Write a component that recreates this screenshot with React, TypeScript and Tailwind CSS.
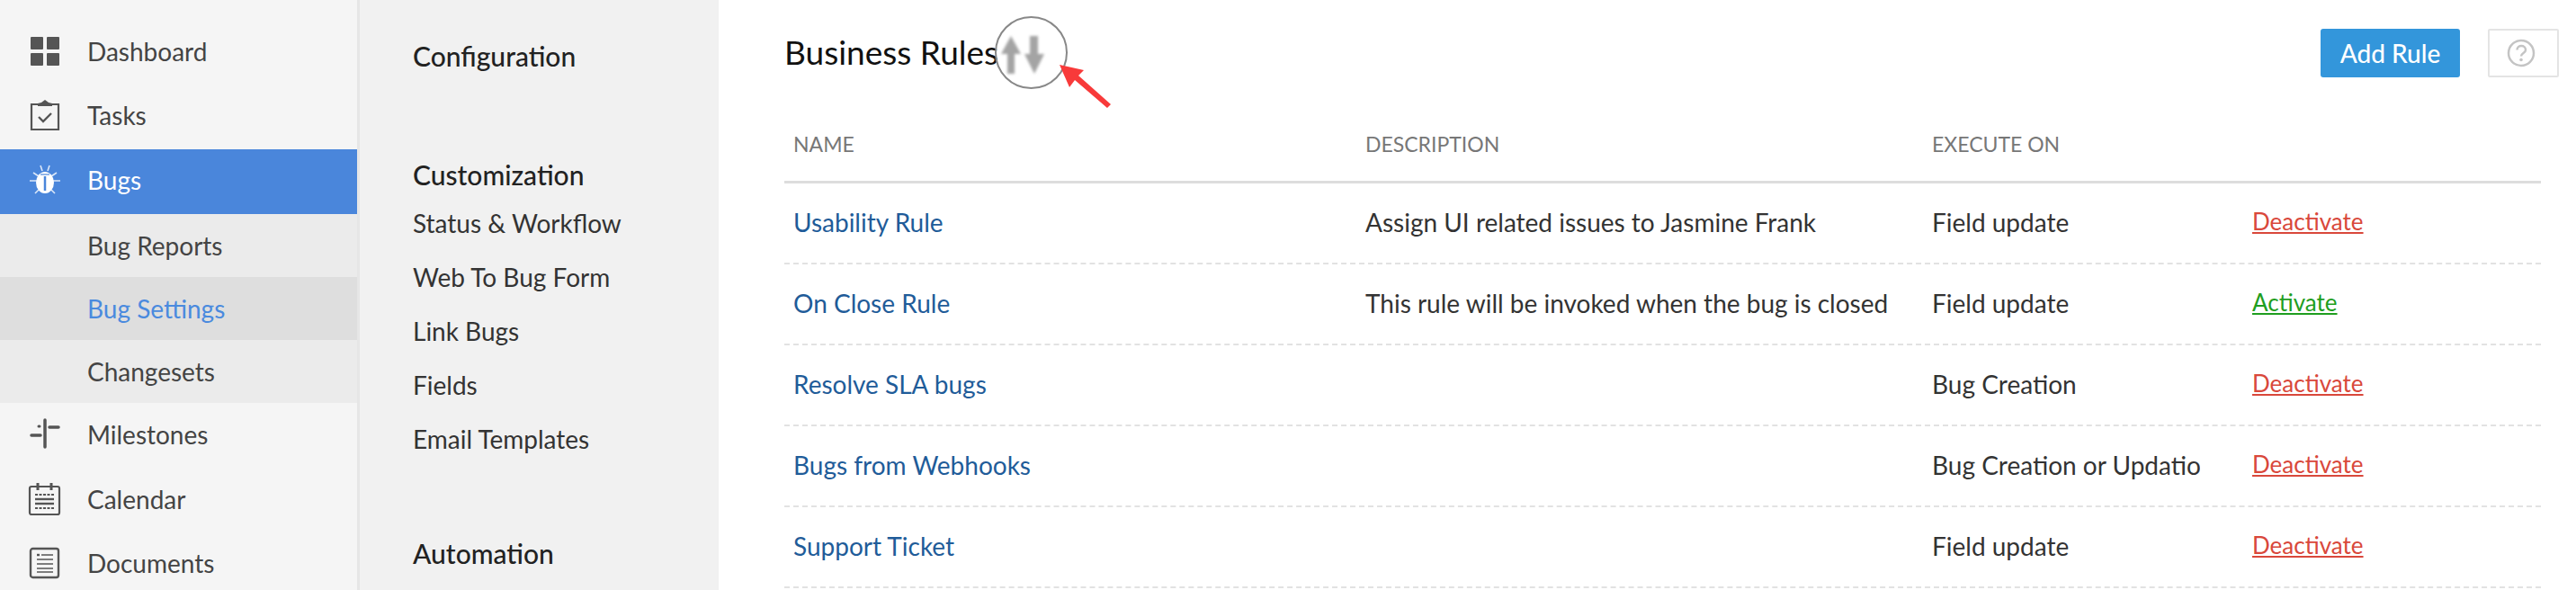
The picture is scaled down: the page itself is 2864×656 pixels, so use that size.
const font = "font-['Lato','Liberation_Sans',sans-serif]";

function DashboardIcon() {
  return (
    <svg width="36" height="36" viewBox="0 0 36 36" fill="#555">
      <rect x="2" y="2" width="14" height="14" rx="1" />
      <rect x="20" y="2" width="14" height="14" rx="1" />
      <rect x="2" y="20" width="14" height="14" rx="1" />
      <rect x="20" y="20" width="14" height="14" rx="1" />
    </svg>
  );
}

function TasksIcon() {
  return (
    <svg width="36" height="36" viewBox="0 0 36 36" fill="none" stroke="#555" strokeWidth="2.2">
      <path d="M10 6H3v28h30V6h-7" />
      <path d="M10 8h16V5l-4-1-4-3-4 3-4 1z" fill="#555" stroke="none" />
      <path d="M11 20l5 5 9-9" strokeWidth="2.4" />
    </svg>
  );
}

function BugIcon() {
  return (
    <svg width="36" height="36" viewBox="0 0 36 36" fill="none" stroke="#fff">
      <ellipse cx="18" cy="21" rx="10" ry="12" fill="#fff" stroke="none" />
      <path d="M18 14v16" stroke="#4a86db" strokeWidth="2.5" />
      <path d="M13 12h10" stroke="#4a86db" strokeWidth="1.2" />
      <path d="M13 2l2 6M23 2l-2 6M1 19l8 0M35 19l-8 0M5 10l6 4M31 10l-6 4M7 33l4-4M29 33l-4-4" strokeWidth="1.6" opacity="0.8" />
    </svg>
  );
}

function MilestoneIcon() {
  return (
    <svg width="36" height="36" viewBox="0 0 36 36" fill="none" stroke="#555" strokeLinecap="round">
      <path d="M18 2v30" strokeWidth="3.5" />
      <path d="M23 10h10M3 19h10" strokeWidth="3.5" />
      <path d="M11 9h1" strokeWidth="3" />
    </svg>
  );
}

function CalendarIcon() {
  return (
    <svg width="38" height="38" viewBox="0 0 38 38" fill="none" stroke="#555">
      <rect x="2" y="5" width="33" height="31" rx="2" strokeWidth="2.2" />
      <path d="M11 1v8M26 1v8" strokeWidth="3" />
      <path d="M8 14h21" strokeWidth="2" strokeDasharray="3 1.5" />
      <path d="M8 19h21" strokeWidth="2.4" />
      <path d="M8 24h21" strokeWidth="2.4" />
      <path d="M8 29h21" strokeWidth="2" strokeDasharray="3 1.5" />
    </svg>
  );
}

function DocumentIcon() {
  return (
    <svg width="36" height="36" viewBox="0 0 36 36" fill="none" stroke="#555">
      <rect x="2" y="2" width="31" height="32" rx="2.5" strokeWidth="2.4" />
      <path d="M9 9h3" strokeWidth="2.4" />
      <path d="M14 9h13M9 14h18M9 19h18M9 24h18M9 28h18" strokeWidth="1.7" />
    </svg>
  );
}

function NavRow({ icon, label }: { icon: React.ReactNode; label: string }) {
  return (
    <div className="flex h-[71.3px] items-center text-[28px] text-[#444]">
      <div className="flex w-[97px] shrink-0 justify-center pl-[3px]">{icon}</div>
      <span>{label}</span>
    </div>
  );
}

function SubRow({ label, active }: { label: string; active?: boolean }) {
  return (
    <div className={`flex h-[70px] items-center pl-[97px] text-[28px] ${active ? "bg-[#dedede] text-[#4a8ade]" : "text-[#444]"}`}>
      {label}
    </div>
  );
}

function Sidebar() {
  return (
    <div className="h-full w-[400px] shrink-0 border-r-[3px] border-[#e6e6e6] bg-[#f5f5f5] pt-[21px]">
      <NavRow icon={<DashboardIcon />} label="Dashboard" />
      <NavRow icon={<TasksIcon />} label="Tasks" />
      <div className="mt-[2px] flex h-[72px] items-center bg-[#4a86db] pb-[3px] text-[28px] text-white">
        <div className="flex w-[97px] shrink-0 justify-center pl-[3px]">
          <BugIcon />
        </div>
        <span>Bugs</span>
      </div>
      <div className="bg-[#ebebeb]">
        <SubRow label="Bug Reports" />
        <SubRow label="Bug Settings" active />
        <SubRow label="Changesets" />
      </div>
      <NavRow icon={<MilestoneIcon />} label="Milestones" />
      <NavRow icon={<CalendarIcon />} label="Calendar" />
      <NavRow icon={<DocumentIcon />} label="Documents" />
    </div>
  );
}

function SettingsMenu() {
  const links = ["Status & Workflow", "Web To Bug Form", "Link Bugs", "Fields", "Email Templates"];
  return (
    <div className="h-full w-[399px] shrink-0 bg-[#f1f1f1] pl-[59px] pt-[42px] text-[#333]">
      <div className="h-[40px] text-[30px] font-medium leading-[40px] text-[#222]">Configuration</div>
      <div className="mt-[92px] h-[40px] text-[30px] font-medium leading-[40px] text-[#222]">Customization</div>
      <div className="mt-[4px]">
        {links.map((l) => (
          <div key={l} className="h-[60px] text-[28px] leading-[60px]">
            {l}
          </div>
        ))}
      </div>
      <div className="mt-[77px] h-[40px] text-[30px] font-medium leading-[40px] text-[#222]">Automation</div>
    </div>
  );
}

const rows = [
  { name: "Usability Rule", desc: "Assign UI related issues to Jasmine Frank", on: "Field update", action: "Deactivate" },
  { name: "On Close Rule", desc: "This rule will be invoked when the bug is closed", on: "Field update", action: "Activate" },
  { name: "Resolve SLA bugs", desc: "", on: "Bug Creation", action: "Deactivate" },
  { name: "Bugs from Webhooks", desc: "", on: "Bug Creation or Updation", action: "Deactivate" },
  { name: "Support Ticket", desc: "", on: "Field update", action: "Deactivate" },
];

function HelpIcon() {
  return (
    <svg width="32" height="32" viewBox="0 0 32 32" fill="none" stroke="#c4c4c4">
      <circle cx="16" cy="16" r="14" strokeWidth="2.5" />
      <path d="M11.5 12.5c0-6 9.5-6 9.5 0 0 3.5-5 3.5-5 7" strokeWidth="2.5" />
      <circle cx="16" cy="23.5" r="1.8" fill="#c4c4c4" stroke="none" />
    </svg>
  );
}

function SortCallout() {
  return (
    <>
      <div className="absolute left-[307px] top-[18px] h-[81px] w-[81px] rounded-full border-2 border-[#888]" />
      <svg className="absolute left-[311px] top-[36px] blur-[1.5px]" width="54" height="50" viewBox="0 0 54 50" fill="#a4a4a4">
        <path d="M14 4l11 20h-7v22h-8V24H3z" />
        <path d="M35 4h9v20h7L40 46 29 24h6z" />
      </svg>
      <svg className="absolute left-[371px] top-[60px]" width="70" height="64" viewBox="0 0 70 64" fill="#f83a3a">
        <path d="M8 12l27 6-6 6 36 32-4 4-36-31-6 8z" />
      </svg>
    </>
  );
}

function Main() {
  return (
    <div className="relative h-full flex-1 bg-white pl-[73px] pr-[39px]">
      <div className="-mr-[20px] flex h-[114px] items-start">
        <h1 className="mt-[36px] text-[37px] leading-[44px] text-[#111]">Business Rules</h1>
        <div className="ml-auto mt-[32px] flex items-center gap-[31px]">
          <button className="flex h-[54px] w-[155px] items-center justify-center rounded-[3px] bg-[#3396db] text-[28px] font-medium text-white">
            Add Rule
          </button>
          <div className="flex h-[54px] w-[79px] items-center justify-center rounded-[2px] border-2 border-[#e4e4e4] pr-[5px]">
            <HelpIcon />
          </div>
        </div>
      </div>
      <div className="flex h-[90px] items-center border-b-[3px] border-[#ddd] pt-[5px] text-[23px] text-[#777]">
        <div className="w-[646px] pl-[10px]">NAME</div>
        <div className="w-[630px]">DESCRIPTION</div>
        <div>EXECUTE ON</div>
      </div>
      {rows.map((r) => (
        <div key={r.name} className="flex h-[90px] items-center border-b-2 border-dashed border-[#e2e2e2] pb-[3px] text-[28px]">
          <div className="w-[646px] pl-[10px] text-[#1f5c99]">{r.name}</div>
          <div className="w-[630px] overflow-hidden whitespace-nowrap text-[#333]">{r.desc}</div>
          <div className="mr-[58px] w-[298px] shrink-0 overflow-hidden whitespace-nowrap text-[#333]">{r.on}</div>
          <div className={`text-[26px] underline ${r.action === "Activate" ? "text-[#1f9e1f]" : "text-[#d9483b]"}`}>{r.action}</div>
        </div>
      ))}
      <SortCallout />
    </div>
  );
}

export default function App() {
  return (
    <div className={`flex h-[656px] w-[2864px] overflow-hidden ${font}`}>
      <Sidebar />
      <SettingsMenu />
      <Main />
    </div>
  );
}
